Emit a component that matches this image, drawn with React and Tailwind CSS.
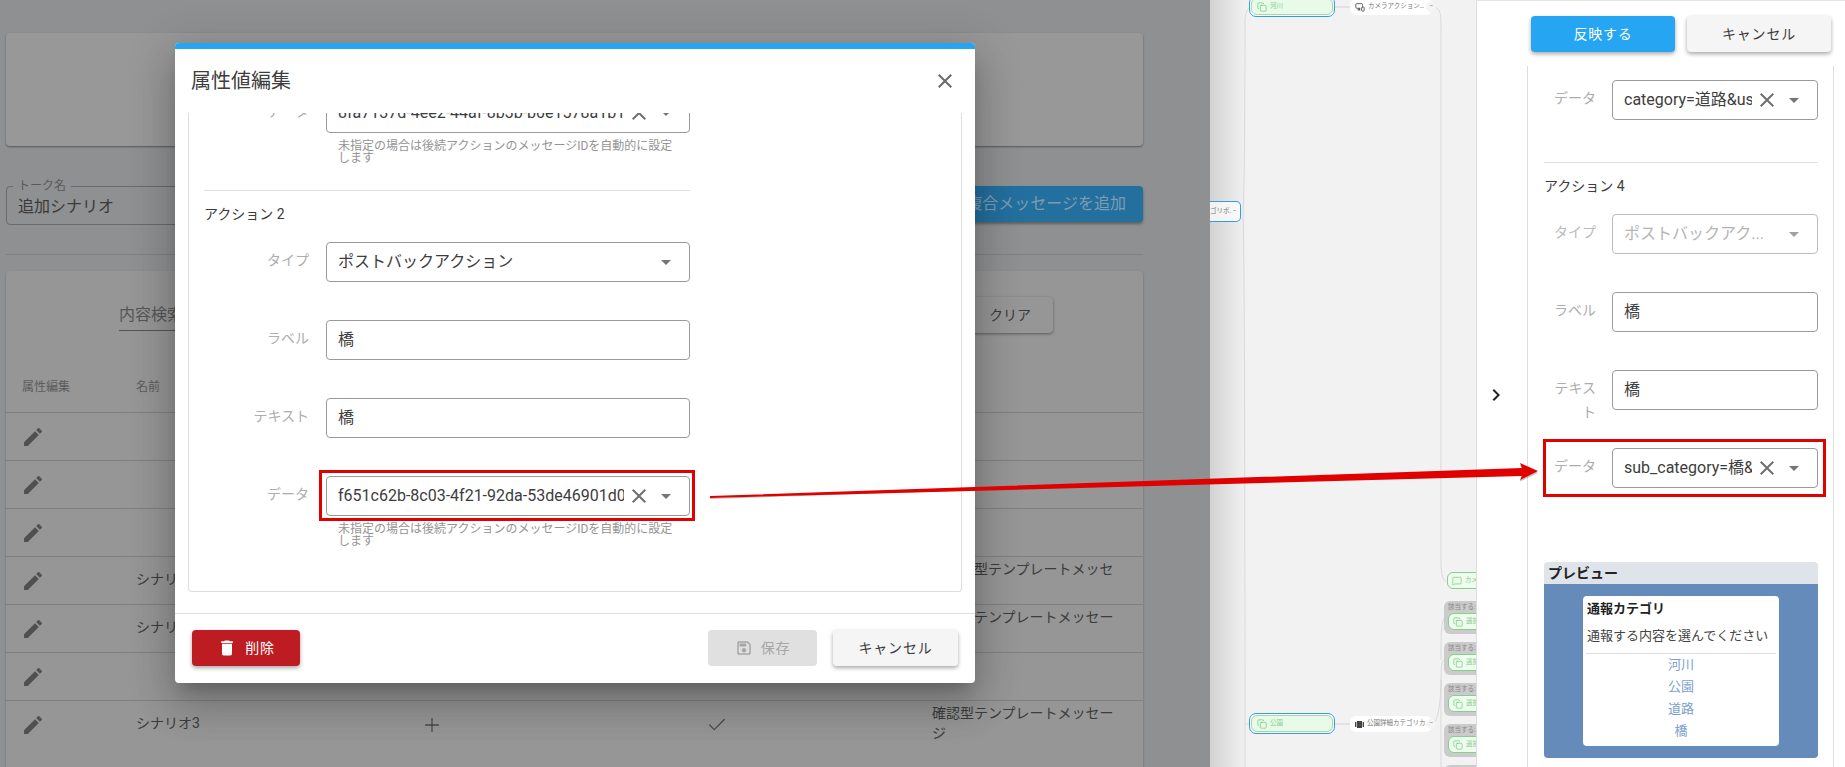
import React from "react";
import { Plus, Check, Copy, MessageSquare, MonitorSmartphone } from "lucide-react";

const F = { fontFamily: '"Roboto","Noto Sans CJK JP",sans-serif' };
const P = {
  x: "M19 6.41 17.59 5 12 10.59 6.41 5 5 6.41 10.59 12 5 17.59 6.41 19 12 13.41 17.59 19 19 17.59 13.41 12z",
  caret: "m7 10 5 5 5-5z",
  edit: "M3 17.25V21h3.75L17.81 9.94l-3.75-3.75L3 17.25zM20.71 7.04c.39-.39.39-1.02 0-1.41l-2.34-2.34a.9959.9959 0 0 0-1.41 0l-1.83 1.83 3.75 3.75 1.83-1.83z",
  del: "M6 19c0 1.1.9 2 2 2h8c1.1 0 2-.9 2-2V7H6v12zM19 4h-3.5l-1-1h-5l-1 1H5v2h14V4z",
  save: "M17 3H5c-1.11 0-2 .9-2 2v14c0 1.1.89 2 2 2h14c1.1 0 2-.9 2-2V7l-4-4zm2 16H5V5h11.17L19 7.83V19zm-7-7c-1.66 0-3 1.34-3 3s1.34 3 3 3 3-1.34 3-3-1.34-3-3-3zM6 6h9v4H6z",
  chev: "M10 6 8.59 7.41 13.17 12l-4.58 4.59L10 18l6-6z",
};
const Ic = ({ d, s = 24, c = "#757575", className = "" }) => (
  <svg width={s} height={s} viewBox="0 0 24 24" fill={c} className={"shrink-0 " + className}><path d={d} /></svg>
);
const Carousel = () => (
  <svg width="9" height="7" viewBox="0 0 9 7" fill="#444444" className="shrink-0">
    <rect x="2" y="0" width="5" height="7" />
    <rect x="0" y="1" width="1.4" height="5" />
    <rect x="7.6" y="1" width="1.4" height="5" />
  </svg>
);

function Field({ value, clear, select, disabled, label, labelW, gap }) {
  return (
    <div className="flex items-start" style={{ gap }}>
      <div className={"h-10 text-right text-sm leading-6 pt-[6px] shrink-0 " + (disabled ? "text-[#bbbbbb]" : "text-[#adadad]")} style={{ width: labelW }}>{label}</div>
      <div className={"flex items-center h-10 flex-1 min-w-0 rounded border bg-white pl-[11px] " + (disabled ? "border-[#bdbdbd]" : "border-[#9a9a9a]")}>
        <div className={"flex-1 min-w-0 overflow-hidden whitespace-nowrap text-base " + (disabled ? "text-[#b5b5b5]" : "text-[#3d3d3d]")}>{value}</div>
        {clear && <Ic d={P.x} s={24} c="#6f6f6f" className="ml-[3px]" />}
        {select && <Ic d={P.caret} s={24} c={disabled ? "#a0a0a0" : "#757575"} className={"ml-[3px] mr-[11px]"} />}
        {!select && <div className="w-[12px]" />}
      </div>
    </div>
  );
}
const Helper = () => (
  <div className="ml-[134px] mt-[7px] text-xs leading-[12px] text-[#949494] whitespace-nowrap">未指定の場合は後続アクションのメッセージIDを自動的に設定<br />します</div>
);

const Rows = [
  ["", false, false, ""],
  ["", false, false, ""],
  ["", false, false, ""],
  ["シナリオ1", false, false, "ボタン型テンプレートメッセージ"],
  ["シナリオ2", false, false, "確認型テンプレートメッセージ"],
  ["", false, false, ""],
  ["シナリオ3", true, true, "確認型テンプレートメッセージ"],
];

function Background() {
  return (
    <div className="w-[1210px] h-full shrink-0 bg-[#8f9091] pt-[33px] px-[6px] overflow-hidden">
      <div className="w-[1137px] h-[113px] rounded bg-[#989898] shadow-[0_1px_2px_rgba(0,0,0,0.4)]" />
      <div className="w-[1137px] flex justify-between mt-[40px] items-start">
        <div className="relative w-[400px] h-[39px] rounded border border-[#6a6a6a] pl-[11px] flex items-center text-base text-[#3a3a3a]">
          <span className="absolute left-[6px] -top-[10px] bg-[#8f9091] px-[5px] text-xs leading-[18px] text-[#5a5a5a]">トーク名</span>
          <span className="pt-[3px]">追加シナリオ</span>
        </div>
        <div className="h-9 w-[300px] rounded bg-[#236f9e] text-base text-[#7c9db3] flex items-center justify-end pr-[17px] shadow-[0_2px_3px_rgba(0,0,0,0.35)]">複合メッセージを追加</div>
      </div>
      <div className="w-[1137px] h-px bg-[#7f8081] mt-[29px]" />
      <div className="w-[1137px] h-[600px] mt-[16px] rounded bg-[#969696] shadow-[0_1px_2px_rgba(0,0,0,0.3)]">
        <div className="flex items-start pt-[26px] h-[104px]">
          <div className="ml-[113px] w-[600px] h-[34px] border-b border-[#555555] text-base text-[#555555] leading-[36px]">内容検索</div>
          <div className="ml-[220px] w-[114px] h-9 rounded bg-[#969696] shadow-[0_1px_3px_rgba(0,0,0,0.4)] text-sm text-[#3a3a3a] flex items-center justify-center pl-[28px]">クリア</div>
        </div>
        <div className="flex items-start text-xs leading-4 text-[#5c5c5c] h-[37px] pt-[4px]">
          <div className="w-[130px] pl-[16px]">属性編集</div>
          <div>名前</div>
        </div>
        {Rows.map((r, i) => (
          <div key={i} className="flex items-center h-12 border-t border-[#7f7f7f] text-sm text-[#3c3c3c]">
            <div className="w-[130px] pl-[15px]"><Ic d={P.edit} c="#505050" /></div>
            <div className="w-[260px] pb-[4px]">{r[0]}</div>
            <div className="w-[72px] flex justify-center">{r[1] && <Plus size={22} strokeWidth={1.4} color="#4a4a4a" />}</div>
            <div className="w-[213px]" />
            <div className="w-[72px] flex justify-center">{r[2] && <Check size={22} strokeWidth={1.4} color="#4a4a4a" />}</div>
            <div className="w-[179px]" />
            <div className="w-[190px] leading-5 pb-[4px]">{r[3]}</div>
          </div>
        ))}
      </div>
    </div>
  );
}

const GreenNode = ({ y, label, h = 21 }) => (
  <div className="absolute left-[39px] w-[86px] rounded-[7px] border border-[#2f9fe0] p-[1px] bg-white" style={{ top: y, height: h }}>
    <div className="h-full rounded-[6px] border border-[#a5d9a8] bg-[#e8fbe9] flex items-center pl-[5px] gap-[3px] text-[6.5px] text-[#86cc8c]">
      <Copy size={10} color="#5dbb63" strokeWidth={1.4} />{label}
    </div>
  </div>
);
const ActNode = ({ y, label, icon }) => (
  <div className="absolute left-[140px] w-[82px] h-4 rounded-[6px] bg-white flex items-center pl-[5px] gap-[3px] text-[6.5px] text-[#777777] whitespace-nowrap" style={{ top: y }}>
    {icon}
    <span>{label}</span>
    <span className="absolute -right-[4px] top-[3px] w-[10px] h-[10px] rounded-full bg-[#f4f4f4] text-[7px] leading-[9px] text-center text-[#888888]">−</span>
  </div>
);
const GrayGroup = ({ y }) => (
  <div className="absolute left-[234px] w-[60px] h-[33px] rounded-[6px] bg-[#cbcbcb] pl-[4px] text-[6.5px] text-[#888888]" style={{ top: y }}>
    <div className="leading-[11px] whitespace-nowrap pt-[1px]">該当する:</div>
    <div className="h-[17px] rounded-[6px] border border-[#86cf8c] bg-[#edfdee] flex items-center pl-[4px] gap-[3px] text-[#86cc8c] whitespace-nowrap">
      <Copy size={10} color="#5dbb63" strokeWidth={1.4} />選択
    </div>
  </div>
);

function Canvas() {
  return (
    <div className="relative w-[267px] h-full shrink-0 overflow-hidden border-r border-[#dedede] bg-[#f2f2f2]">
      <div className="absolute left-0 top-0 bottom-0 w-[36px] bg-gradient-to-r from-[#d2d2d2] to-[#f2f2f2]" />
      <svg width="267" height="767" className="absolute left-0 top-0" fill="none" stroke="#d9d9d9" strokeWidth="1">
        <path d="M33 212 C35 180 35 40 35 22 C35 14 37 9 39 8 M33 212 C35 260 35 700 35 724 M35 724 H39 M35 724 V767" />
        <path d="M125 7 H140 M125 724 H140" strokeWidth="2" stroke="#e2e2e2" />
        <path d="M222 7 C231 7 231 15 231 26 V560 C231 575 233 581 236 581 M222 724 C228 724 231 700 231 680 V767 M231 690 C231 670 231 660 234 660 M231 660 C231 635 231 625 234 618" />
      </svg>
      <GreenNode y={-4} label="河川" />
      <ActNode y={-1} label="カメラアクション…" icon={<MonitorSmartphone size={10} color="#444444" />} />
      <div className="absolute left-0 top-[201px] w-[31px] h-[21px] bg-white/70 rounded-r-[5px] border border-l-0 border-[#2f9fe0] text-[6.5px] leading-[19px] text-[#777777] whitespace-nowrap overflow-hidden">ゴリポ. −</div>
      <div className="absolute left-[237px] top-[572px] w-[60px] h-[17px] rounded-[6px] border border-[#86cf8c] bg-[#edfdee] flex items-center pl-[4px] gap-[3px] text-[6.5px] text-[#86cc8c] whitespace-nowrap">
        <MessageSquare size={10} color="#5dbb63" strokeWidth={1.4} />カメラ
      </div>
      <GrayGroup y={601} />
      <GrayGroup y={642} />
      <GrayGroup y={683} />
      <GrayGroup y={724} />
      <GrayGroup y={765} />
      <GreenNode y={713} label="公園" />
      <ActNode y={716} label="公園詳細カテゴリカ…" icon={<Carousel />} />
    </div>
  );
}

function Panel() {
  const fw = { labelW: 52, gap: 16 };
  return (
    <div className="flex-1 h-full bg-white border-t border-[#e4e4e4] flex overflow-hidden">
      <div className="w-[50px] shrink-0 pt-[382px] pl-[7px]"><Ic d={P.chev} c="#222222" s={24} /></div>
      <div className="w-[318px]">
        <div className="h-[65px] flex pt-[15px] pl-[4px] gap-3">
          <div className="w-[144px] h-9 rounded bg-[#25a5f2] text-white text-sm tracking-[0.8px] flex items-center justify-center shadow-[0_2px_4px_rgba(0,0,0,0.35)]">反映する</div>
          <div className="w-[144px] h-9 rounded bg-[#f5f5f5] text-[#3d3d3d] text-sm tracking-[0.8px] flex items-center justify-center shadow-[0_2px_4px_rgba(0,0,0,0.35)]">キャンセル</div>
        </div>
        <div className="w-[307px] h-[701px] border-x border-[#dcdcdc] pl-[16px] pt-[14px]">
          <div className="w-[274px]">
            <Field label="データ" value="category=道路&user=1" clear select {...fw} />
            <div className="h-px bg-[#e0e0e0] mt-[42px]" />
            <div className="text-sm leading-5 text-[#3d3d3d] mt-[13px]">アクション 4</div>
            <div className="mt-[18px]"><Field label="タイプ" value="ポストバックアク..." select disabled {...fw} /></div>
            <div className="mt-[38px]"><Field label="ラベル" value="橋" {...fw} /></div>
            <div className="mt-[38px]"><Field label={<>テキス<br />ト</>} value="橋" {...fw} /></div>
            <div className="mt-[38px]"><Field label="データ" value="sub_category=橋&user=1" clear select {...fw} /></div>
            <div className="mt-[74px] rounded overflow-hidden">
              <div className="h-[22px] bg-[#dfe3ea] pl-1 text-sm font-bold leading-[22px] text-[#222222]">プレビュー</div>
              <div className="h-[174px] bg-[#648bba] pt-3">
                <div className="mx-auto w-[196px] h-[150px] bg-white rounded px-[4px] text-[13px] text-[#444444]">
                  <div className="font-bold pt-[4px] leading-[18px] text-[#222222]">通報カテゴリ</div>
                  <div className="mt-[9px] leading-[18px] whitespace-nowrap">通報する内容を選んでください</div>
                  <div className="h-px bg-[#dddddd] mt-[8px] -mx-[1px]" />
                  <div className="text-center text-[#7ba0cf] leading-[22px]">
                    <div>河川</div><div>公園</div><div>道路</div><div>橋</div>
                  </div>
                </div>
              </div>
            </div>
          </div>
        </div>
      </div>
    </div>
  );
}

function Modal() {
  const fw = { labelW: 105, gap: 17 };
  return (
    <div className="absolute left-[175px] top-[43px] w-[800px] h-[640px] rounded bg-white overflow-hidden shadow-[0_11px_15px_-7px_rgba(0,0,0,0.2),0_24px_38px_3px_rgba(0,0,0,0.14),0_9px_46px_8px_rgba(0,0,0,0.12)] flex flex-col">
      <div className="h-[6px] bg-[#25a5f2] shrink-0" />
      <div className="h-[64px] shrink-0 flex items-center justify-between pl-[16px] pr-[18px]">
        <div className="text-xl text-[#3d3d3d]">属性値編集</div>
        <Ic d={P.x} s={24} c="#6b6b6b" />
      </div>
      <div className="h-[500px] shrink-0 px-[13px] overflow-hidden">
        <div className="h-[479px] border-x border-b border-[#dddddd] rounded-b overflow-hidden pl-[15px]">
          <div className="w-[486px] -mt-[20px]">
            <Field label="データ" value="8fa7137d-4ee2-44af-8b3b-b0e1578a1b1c" clear select {...fw} />
            <Helper />
            <div className="h-px bg-[#e0e0e0] mt-[26px]" />
            <div className="text-sm leading-5 text-[#3d3d3d] mt-[13px]">アクション 2</div>
            <div className="mt-[18px]"><Field label="タイプ" value="ポストバックアクション" select {...fw} /></div>
            <div className="mt-[38px]"><Field label="ラベル" value="橋" {...fw} /></div>
            <div className="mt-[38px]"><Field label="テキスト" value="橋" {...fw} /></div>
            <div className="mt-[38px]"><Field label="データ" value="f651c62b-8c03-4f21-92da-53de46901d0a" clear select {...fw} /></div>
            <Helper />
          </div>
        </div>
      </div>
      <div className="h-[70px] border-t border-[#e0e0e0] flex items-start justify-between pt-[16px] pl-[17px] pr-[17px]">
        <div className="w-[108px] h-9 rounded bg-[#bd1c22] text-white text-sm tracking-[0.8px] flex items-center justify-center gap-[8px] shadow-[0_2px_4px_rgba(0,0,0,0.35)]"><Ic d={P.del} s={20} c="#ffffff" />削除</div>
        <div className="flex gap-[16px]">
          <div className="w-[109px] h-9 rounded bg-[#e0e0e0] text-[#a6a6a6] text-sm tracking-[0.8px] flex items-center justify-center gap-[8px]"><Ic d={P.save} s={18} c="#a6a6a6" />保存</div>
          <div className="w-[125px] h-9 rounded bg-[#f5f5f5] text-[#3d3d3d] text-sm tracking-[0.8px] flex items-center justify-center shadow-[0_2px_4px_rgba(0,0,0,0.35)]">キャンセル</div>
        </div>
      </div>
    </div>
  );
}

export default function App() {
  return (
    <div className="relative w-[1845px] h-[767px] overflow-hidden flex" style={F}>
      <Background />
      <Canvas />
      <Panel />
      <Modal />
      {/* annotations */}
      <div className="absolute left-[319px] top-[470px] w-[376px] h-[51px] border-[3px] border-[#e00000]" />
      <div className="absolute left-[1543px] top-[439px] w-[283px] h-[58px] border-[3px] border-[#e00000]" />
      <svg width="1845" height="767" className="absolute left-0 top-0 pointer-events-none">
        <polygon points="710,497.5 1522,471 1520,480 1538,471.5 1520,463.5 1522,469 710,496.5" fill="#808080" opacity="0.5" transform="translate(0,1.5)" />
        <polygon points="710,498 1522,476 1520,480 1538,471 1520,463 1522,468 710,496" fill="#e00000" />
      </svg>
    </div>
  );
}
